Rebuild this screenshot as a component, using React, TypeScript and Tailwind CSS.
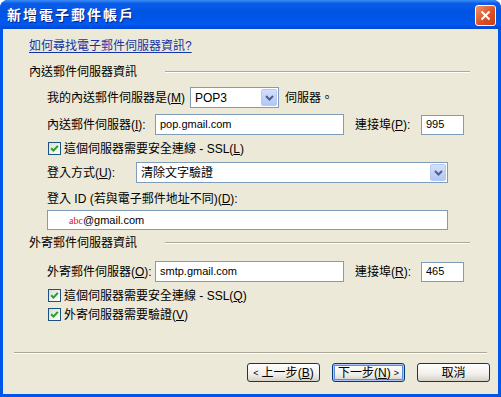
import type { ReactNode } from "react";

// Windows XP style "add e-mail account" wizard page

function Acc({ k }: { k: string }) {
  return (
    <>
      (<span className="underline underline-offset-[1px]">{k}</span>)
    </>
  );
}

function CheckBox({ children }: { children: ReactNode }) {
  return (
    <div className="flex h-[13px] items-center pl-[19px]">
      <span className="flex h-[13px] w-[13px] shrink-0 items-center justify-center border border-[#1c5180] bg-[linear-gradient(135deg,#dcdcd7,#ffffff)]">
        <svg width="9" height="9" viewBox="0 0 9 9">
          <path d="M1.2 4.2 L3.5 6.6 L7.8 1.8" stroke="#21a121" strokeWidth="2" fill="none" />
        </svg>
      </span>
      <span className="ml-[3px] whitespace-nowrap leading-[14px]">{children}</span>
    </div>
  );
}

function TextBox({
  value,
  className,
}: {
  value: ReactNode;
  className: string;
}) {
  return (
    <div
      className={`flex items-center border border-[#7f9db9] bg-white px-[4px] text-[11px] ${className}`}
    >
      {value}
    </div>
  );
}

function DropDown({ value, className }: { value: string; className: string }) {
  return (
    <div
      className={`flex h-[21px] items-center justify-between border border-[#7f9db9] bg-white pl-[4px] ${className}`}
    >
      <span className="whitespace-nowrap">{value}</span>
      <span className="mr-[1px] flex h-[17px] w-[16px] items-center justify-center rounded-[2px] border border-[#b6c9f4] bg-[linear-gradient(180deg,#d3e0fd,#b2c7f6)]">
        <svg width="9" height="6" viewBox="0 0 9 6">
          <path d="M1 1 L4.5 4.5 L8 1" stroke="#4d6185" strokeWidth="2" fill="none" />
        </svg>
      </span>
    </div>
  );
}

function GroupHeader({ title }: { title: string }) {
  return (
    <div className="flex h-[14px] items-center">
      <span className="w-[136px] whitespace-nowrap leading-[14px]">{title}</span>
      <div className="h-[2px] w-[305px] border-t border-b border-t-[#aca899] border-b-white" />
    </div>
  );
}

function WizButton({
  children,
  primary,
}: {
  children: ReactNode;
  primary?: boolean;
}) {
  return (
    <button
      type="button"
      className={`flex h-[19px] w-[73px] items-center justify-center rounded-[3px] border border-[#003c74] bg-[linear-gradient(180deg,#ffffff,#f0efea_60%,#d6d0c5)] leading-[14px] text-black ${
        primary ? "shadow-[inset_0_0_0_1px_#aec6f3,inset_0_0_0_2px_#5f8ae3]" : ""
      }`}
    >
      {children}
    </button>
  );
}

export default function App() {
  return (
    <div className="flex h-[397px] w-[501px] flex-col overflow-hidden rounded-t-[8px] bg-[#0055ea] font-['Liberation_Sans','Noto_Sans_CJK_TC',sans-serif] text-[12px] text-black">
      {/* title bar */}
      <div className="flex h-[29px] shrink-0 items-start bg-[linear-gradient(180deg,#3c8ef7_0%,#0a5ce8_12%,#0054e3_45%,#0058ee_85%,#0047d4_100%)]">
        <span className="ml-[7px] mt-[7px] whitespace-nowrap text-[14px] font-bold leading-[17px] tracking-[2px] text-white [text-shadow:1px_1px_0_#0a1f8a]">
          新增電子郵件帳戶
        </span>
        <span className="ml-auto mr-[5px] mt-[5px] flex h-[21px] w-[21px] items-center justify-center rounded-[3px] border border-white bg-[linear-gradient(135deg,#f0946d,#dc5225_55%,#c43d16)]">
          <svg width="11" height="11" viewBox="0 0 11 11">
            <path d="M1.5 1.5 L9.5 9.5 M9.5 1.5 L1.5 9.5" stroke="#ffffff" strokeWidth="2" />
          </svg>
        </span>
      </div>

      {/* client area */}
      <div className="mx-[3px] mb-[3px] flex flex-1 flex-col bg-[#ece9d8]">
        <div className="flex flex-col pl-[26px]">
          <a className="mt-[10px] h-[14px] whitespace-nowrap leading-[14px] text-[#1633a3] underline underline-offset-[2px]">
            如何尋找電子郵件伺服器資訊?
          </a>

          <div className="mt-[12px]">
            <GroupHeader title="內送郵件伺服器資訊" />
          </div>

          <div className="mt-[8px] flex h-[21px] items-center pl-[18px]">
            <span className="w-[143px] whitespace-nowrap">
              我的內送郵件伺服器是<Acc k="M" />
            </span>
            <DropDown value="POP3" className="w-[89px]" />
            <span className="ml-[6px] whitespace-nowrap">伺服器。</span>
          </div>

          <div className="mt-[6px] flex h-[21px] items-center pl-[18px]">
            <span className="w-[108px] whitespace-nowrap">
              內送郵件伺服器<Acc k="I" />:
            </span>
            <TextBox value="pop.gmail.com" className="h-[21px] w-[189px]" />
            <span className="ml-[11px] w-[66px] whitespace-nowrap">
              連接埠<Acc k="P" />:
            </span>
            <TextBox value="995" className="h-[20px] w-[43px]" />
          </div>

          <div className="mt-[7px]">
            <CheckBox>
              這個伺服器需要安全連線 - SSL<Acc k="L" />
            </CheckBox>
          </div>

          <div className="mt-[7px] flex h-[21px] items-center pl-[18px]">
            <span className="w-[89px] whitespace-nowrap">
              登入方式<Acc k="U" />:
            </span>
            <DropDown value="清除文字驗證" className="w-[312px]" />
          </div>

          <div className="mt-[9px] h-[14px] whitespace-nowrap pl-[18px] leading-[14px]">
            登入 ID (若與電子郵件地址不同)<Acc k="D" />:
          </div>

          <div className="mt-[4px] pl-[18px]">
            <TextBox
              value={
                <span className="pl-[17px]">
                  <span className="font-['Liberation_Serif',serif] text-[10px] text-[#e01010]">abc</span>
                  @gmail.com
                </span>
              }
              className="h-[20px] w-[401px]"
            />
          </div>

          <div className="mt-[6px]">
            <GroupHeader title="外寄郵件伺服器資訊" />
          </div>

          <div className="mt-[11px] flex h-[21px] items-center pl-[18px]">
            <span className="w-[108px] whitespace-nowrap">
              外寄郵件伺服器<Acc k="O" />:
            </span>
            <TextBox value="smtp.gmail.com" className="h-[21px] w-[189px]" />
            <span className="ml-[11px] w-[66px] whitespace-nowrap">
              連接埠<Acc k="R" />:
            </span>
            <TextBox value="465" className="h-[20px] w-[43px]" />
          </div>

          <div className="mt-[7px]">
            <CheckBox>
              這個伺服器需要安全連線 - SSL<Acc k="Q" />
            </CheckBox>
          </div>

          <div className="mt-[6px]">
            <CheckBox>
              外寄伺服器需要驗證<Acc k="V" />
            </CheckBox>
          </div>
        </div>

        {/* footer */}
        <div className="ml-[11px] mt-[31px] h-[2px] w-[473px] border-t border-b border-t-[#aca899] border-b-white" />
        <div className="mt-[9px] flex justify-end gap-[12px] pr-[8px]">
          <WizButton>
            <span className="mr-[3px] text-[9px]">&lt;</span>上一步<Acc k="B" />
          </WizButton>
          <WizButton primary>
            下一步<Acc k="N" />
            <span className="ml-[3px] text-[9px]">&gt;</span>
          </WizButton>
          <WizButton>取消</WizButton>
        </div>
      </div>
    </div>
  );
}
